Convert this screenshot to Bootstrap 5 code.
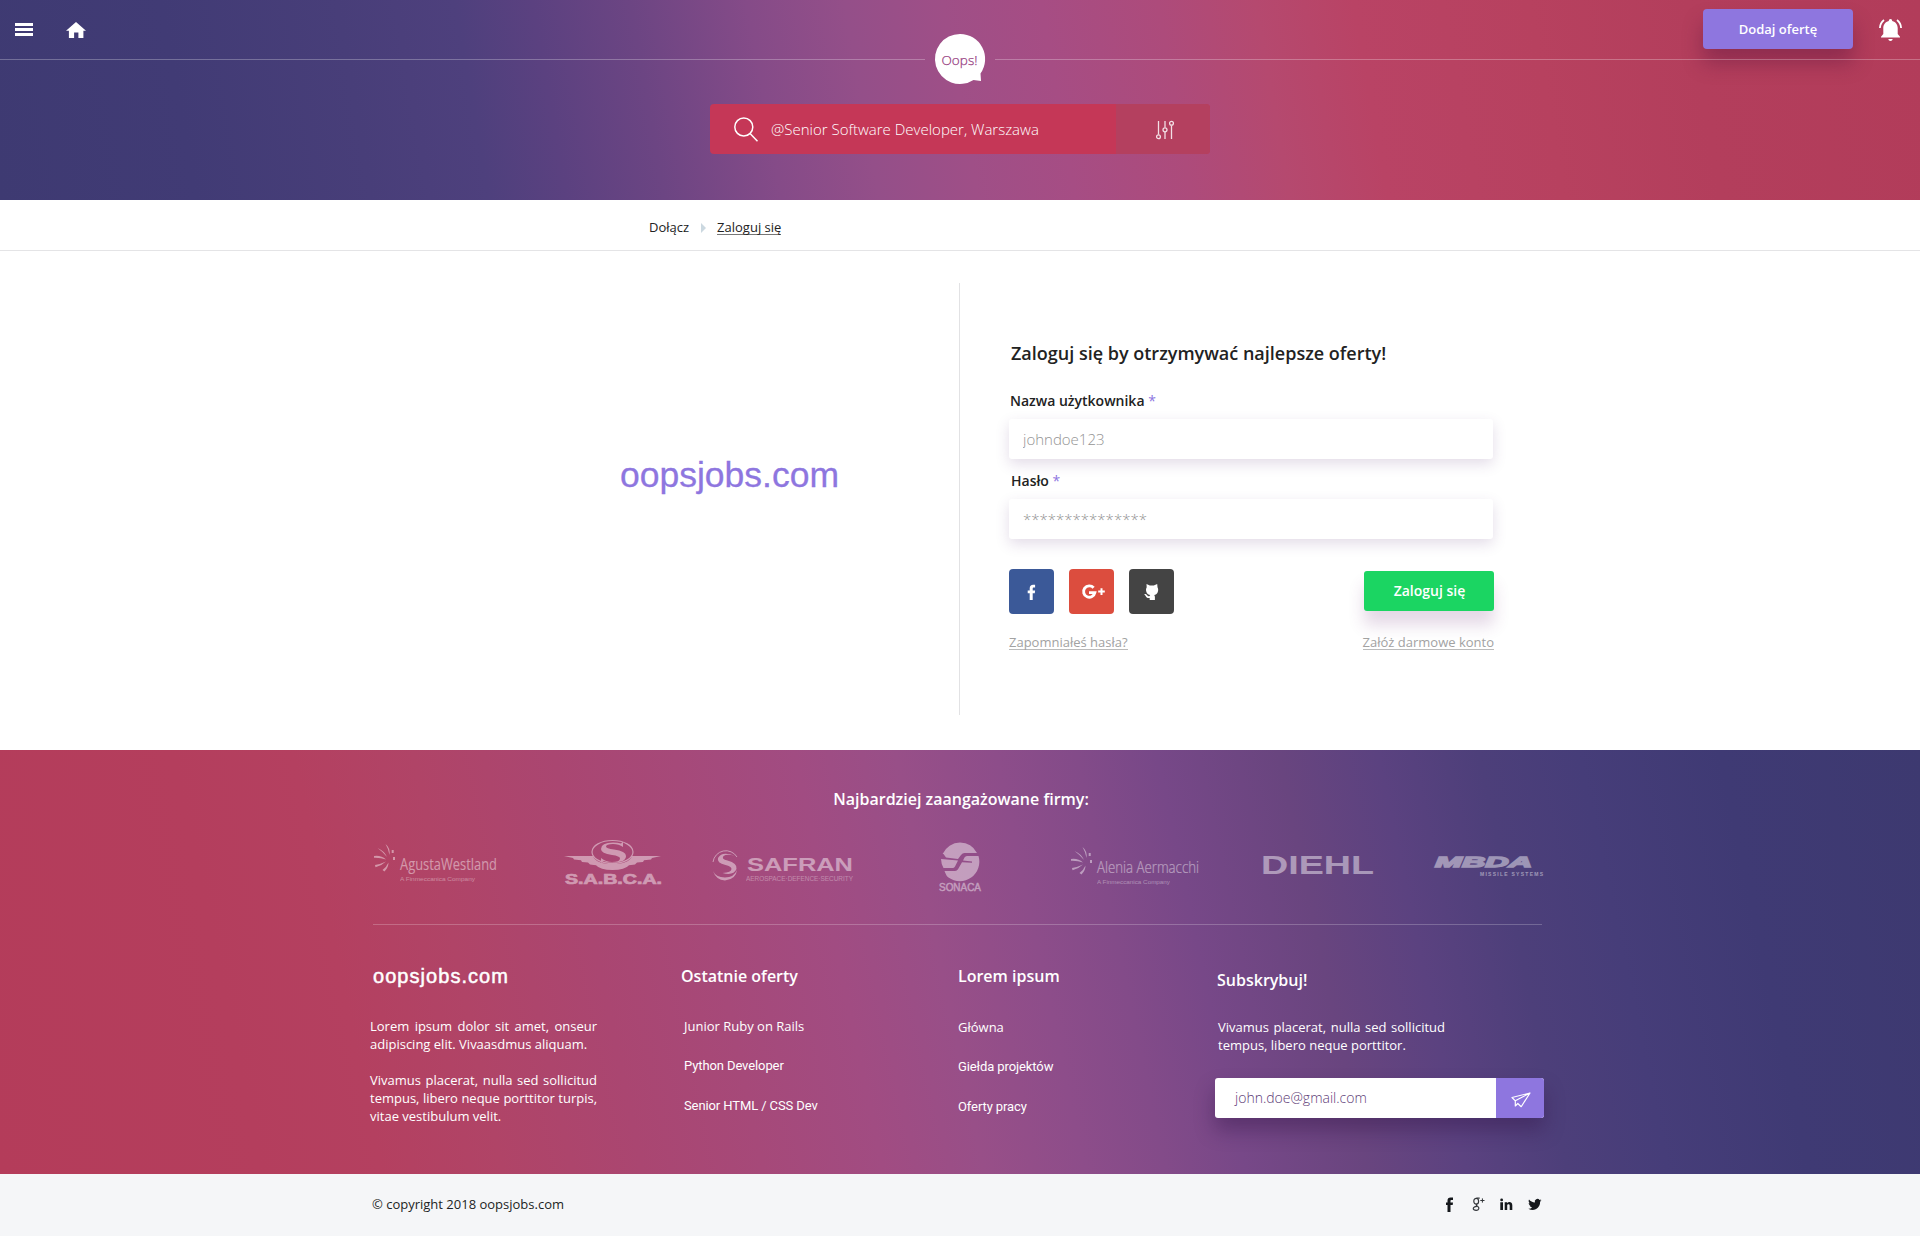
<!DOCTYPE html>
<html lang="pl">
<head>
<meta charset="utf-8">
<meta name="viewport" content="width=device-width, initial-scale=1">
<title>oopsjobs.com – Zaloguj się</title>
<link href="https://cdn.jsdelivr.net/npm/bootstrap@5.3.0/dist/css/bootstrap.min.css" rel="stylesheet">
<style>
body{font-family:"Open Sans","Noto Sans",sans-serif;font-size:13px;line-height:18px;color:#222;background:#fff;overflow-x:hidden}
a{color:inherit;text-decoration:none}
svg{display:block;flex:none;overflow:visible}
.site-head{height:200px;background:linear-gradient(80deg,#3e3a72 0%,#413b75 10%,#483e79 19%,#4e407d 25%,#5b4180 29%,#6c4583 34%,#854b88 40%,#944f89 45%,#9f4f87 50%,#a64d84 55%,#ad4b7b 61%,#b5496f 66%,#b94365 71%,#b7415f 80%,#b33e5c 88%,#b23c5a 100%)}
.topbar{height:59px;padding:9px 18px 0 15px}
.topbar .menu{margin-top:14px}
.topbar .home{margin:12px 0 0 33px}
.offer{width:150px;height:40px;line-height:40px;padding:0;border:0;border-radius:4px;background:#8e76df;color:#fff;font-size:13px;font-weight:600;box-shadow:0 14px 20px rgba(90,20,60,.4)}
.offer:hover{background:#7f67d3;color:#fff}
.bell{margin:9px 0 0 26px}
.brandline{height:50px;margin-top:-25px;gap:10px}
.rule{height:1px;background:rgba(255,255,255,.27)}
.finder{width:500px;height:50px;margin-top:20px;border-radius:4px;background:#c53757;color:#fff;font-size:15px;font-weight:300;overflow:hidden}
.finder .q{padding-left:24px;gap:13px}
.finder .filter{width:94px;background:#b4405f;padding-left:3px;padding-top:1px}
.crumbs{height:51px;border-bottom:1px solid #e4e4e6;padding-left:649px;padding-top:18px}
.crumbs svg{margin:5px 11px 0 12px}
.ul{border-bottom:1px solid #777;height:17px;line-height:18px}
.stage{height:499px;padding-top:32px}
.left-side{width:960px;height:432px;border-right:1px solid #e2e2e4;padding:172px 0 0 620px}
.big-logo{font:35.500px/40px "Liberation Sans",Arial,sans-serif;color:#8e76df;-webkit-text-stroke:.3px #8e76df}
.login{width:485px;margin-left:49px;padding-top:58px}
.login h1{font-size:18px;line-height:24px;font-weight:600;margin:0 0 26px 2px}
.login label{display:block;font-size:14px;line-height:20px;font-weight:600;margin:0 0 8px 1px}
.login label + input + label{margin:12px 0 8px 2px}
.login label b{color:#8e76df;font-weight:400}
.login .form-control{width:484px;height:40px;border:0;border-radius:3px;padding:0 14px;font-size:15px;font-weight:300;line-height:40px;box-shadow:0 5px 14px rgba(90,50,120,.17);color:#999;background:#fff}
.login .form-control::placeholder{color:#949494;opacity:1}
.socials{gap:15px;margin-top:0}
.soc{width:45px;height:45px;border-radius:4px}
.fb{background:#3b5998}.gp{background:#dc4d3e}.gh{background:#444}
.act{margin-top:30px}
.go{width:130px;height:40px;line-height:40px;margin-top:2px;padding:0 0 0 1px;border:0;border-radius:3px;background:#1bd562;color:#fff;font-size:14px;font-weight:600;box-shadow:0 14px 16px rgba(110,50,120,.19)}
.go:hover{background:#17c258;color:#fff}
.helplinks{margin-top:19px}
.soft{color:#a2a2a2;border-color:#bbb}
.partners{height:424px;background:linear-gradient(78deg,#b43c5a 0%,#b43e5d 13%,#b44060 19%,#b04467 25%,#aa4671 32%,#a64979 38%,#a14c82 44%,#984f88 49%,#8d4d8a 54%,#834b89 58%,#774888 62%,#69457f 68%,#5b4280 73%,#4d3f7a 78%,#463d79 83%,#3f3a74 90%,#3d3970 100%);color:#fff;padding-top:38px}
.partners h2,.partners h3{font-size:16px;line-height:22px;font-weight:600;margin:0}
.partners h2{padding-left:2px}
.logos{height:60px;margin-top:26px;padding-left:373px;fill:#fff;opacity:.45}
.logos text{font-family:"Liberation Sans",Arial,sans-serif}
.logos .hum{font-family:"Open Sans",sans-serif}
.logos .g1{margin-left:65px}.logos .g2{margin-left:49px}.logos .g3{margin-left:83px}.logos .g4{margin-left:87px}.logos .g5{margin-left:61px}.logos .g6{margin-left:60px}
.split{width:1169px;height:1px;margin:28px 0 0 373px;background:rgba(255,255,255,.22)}
.foot-cols{padding:40px 0 0 370px}
.fc1{width:311px}.fc2{width:277px}.fc3{width:257px}.fc4{width:329px}
.fc1 h3{font:20px/22px "Liberation Sans",Arial,sans-serif;letter-spacing:1.05px;-webkit-text-stroke:.5px #fff;margin:0 0 30px 3px}
.fc1 p{width:227px;margin:0 0 18px;text-align:justify}
.fc2 h3,.fc3 h3{margin-bottom:30px}
.fc2 ul,.fc3 ul{gap:22px}
.fc3 ul{padding-top:1px}
.fc2 ul{padding-left:3px!important}
.alt{font-family:Roboto,sans-serif;letter-spacing:-.1px}
.fc4 h3{margin:4px 0 27px 2px}
.fc4 p{width:227px;margin:0 0 24px 3px;text-align:justify}
.mailbox{width:329px;height:40px;border-radius:3px;overflow:hidden;background:#fff}
.mailwrap{box-shadow:0 12px 20px rgba(50,20,70,.4);border-radius:3px}
.mailbox span{font-size:14px;font-weight:300;line-height:40px;color:#5d3b76;padding-left:20px}
.mailbox a{width:48px;background:#8e76df;padding-top:3px;padding-left:1px}
.legal{height:62px;background:#f5f6f8;padding:21px 378px 0 372px;color:#1c1f24}
.legal .ic{margin-top:2px}
.legal .ic a+a{margin-left:15px}
</style>
</head>
<body>
<header class="site-head">
  <nav class="topbar d-flex align-items-start">
    <a href="#" class="menu" aria-label="Menu"><svg width="18" height="13" fill="#fff"><path d="M0 0h18v3H0zM0 5h18v3H0zM0 10h18v3H0z"/></svg></a>
    <a href="#" class="home" aria-label="Start"><svg width="20" height="17" viewBox="0 0 20 17" fill="#fff"><path d="M10 1 20 9.800h-2.600V17h-5v-5.600H8.100V17H2.900V9.800H0z"/></svg></a>
    <a href="#" class="btn offer ms-auto">Dodaj ofertę</a>
    <a href="#" class="bell" aria-label="Powiadomienia"><svg width="23" height="24" viewBox="0 0 23 24" fill="#fff"><path d="M11.500 1c1.100 0 1.700.8 1.700 1.900 3.800.9 5.500 3.900 5.500 7.200v6l2.300 2.700v.7H2v-.7l2.300-2.700v-6c0-3.300 1.800-6.300 5.500-7.200C9.800 1.800 10.400 1 11.500 1zM9.300 21h4.400c-.2 1.200-1 2-2.200 2s-2-.8-2.200-2z"/><path fill="none" stroke="#fff" stroke-width="1.800" d="M5 2C2.600 3.800 1.100 6.600.9 10M18 2c2.400 1.800 3.900 4.600 4.100 8"/></svg></a>
  </nav>
  <div class="brandline d-flex align-items-center">
    <div class="rule flex-fill"></div>
    <a href="#" aria-label="Oops!"><svg width="50" height="50" viewBox="0 0 50 50"><path fill="#fff" d="M25 0a25 25 0 0 1 20.500 39.500L46 47l-7.500-1A25 25 0 1 1 25 0z"/><text x="6.500" y="31" font-family="Open Sans" font-size="13.500" font-weight="300" fill="#97407f" stroke="#97407f" stroke-width=".25" textLength="36">Oops!</text></svg></a>
    <div class="rule flex-fill"></div>
  </div>
  <div class="finder d-flex mx-auto">
    <div class="q d-flex align-items-center flex-fill">
      <svg width="24" height="25" viewBox="0 0 24 25" fill="none" stroke="#fff" stroke-width="1.500"><circle cx="9.800" cy="10" r="9"/><path d="m16.300 16.800 7.200 7.400"/></svg>
      <span>@Senior Software Developer, Warszawa</span>
    </div>
    <a href="#" class="filter d-flex align-items-center justify-content-center" aria-label="Filtry"><svg width="18" height="20" viewBox="0 0 18 20" fill="none" stroke="#f3dfe5" stroke-width="1.300"><path d="M2.500 1v13.500M9 1v6.500M9 12v7M15.500 5.500V19"/><circle cx="2.500" cy="16.700" r="1.900"/><circle cx="9" cy="9.800" r="2"/><circle cx="15.500" cy="3.200" r="1.900"/></svg></a>
  </div>
</header>

<nav class="crumbs d-flex align-items-start">
  <a href="#">Dołącz</a>
  <svg width="5" height="10" fill="#cbd8e0"><path d="M0 0l5 5-5 5z"/></svg>
  <a href="#" class="ul">Zaloguj się</a>
</nav>

<main class="stage d-flex align-items-start">
  <div class="left-side"><div class="big-logo">oopsjobs.com</div></div>
  <form class="login">
    <h1>Zaloguj się by otrzymywać najlepsze oferty!</h1>
    <label for="user">Nazwa użytkownika <b>*</b></label>
    <input id="user" class="form-control" type="text" placeholder="johndoe123">
    <label for="pass">Hasło <b>*</b></label>
    <input id="pass" class="form-control" type="text" placeholder="***************">
    <div class="act d-flex align-items-start justify-content-between">
      <div class="socials d-flex">
        <a href="#" class="soc fb" aria-label="Facebook"><svg width="45" height="45" fill="#fff"><path d="M20.700 31v-6.800h-2v-2.800h2v-2c0-2.300 1.300-3.600 3.400-3.600h2v2.600h-1.300c-.8 0-1.100.4-1.100 1.100v1.900h2.400l-.3 2.800h-2.100V31z"/></svg></a>
        <a href="#" class="soc gp" aria-label="Google+"><svg width="45" height="45" viewBox="0 0 45 45" fill="none" stroke="#fff"><path stroke-width="2.900" d="M24.600 18.800a5.700 5.700 0 1 0 1.300 4.800H20"/><path stroke-width="2" d="M32.500 19.300v6.600M29.200 22.600h6.600"/></svg></a>
        <a href="#" class="soc gh" aria-label="GitHub"><svg width="45" height="45" fill="#fff"><path d="m17.500 15 3.300 1.400h4L28.200 15l.3 3.300c.9 1.400.9 3.600.1 5.100-.7 1.400-1.900 2.300-3.400 2.600.5.600.7 1.200.7 2V31h-5.200v-2c-2.300.4-3.300-.4-3.900-1.700-.4-.8-.8-1.200-1.500-1.700l.4-.7c1.200 0 1.900.5 2.500 1.400.7.900 1.300 1.100 2.400.7.100-.4.300-.7.600-1-1.600-.3-2.900-1.200-3.600-2.600-.8-1.500-.8-3.700.1-5.100z"/></svg></a>
      </div>
      <button type="button" class="btn go">Zaloguj się</button>
    </div>
    <div class="helplinks d-flex justify-content-between">
      <a href="#" class="ul soft">Zapomniałeś hasła?</a>
      <a href="#" class="ul soft">Załóż darmowe konto</a>
    </div>
  </form>
</main>

<section class="partners">
  <h2 class="text-center">Najbardziej zaangażowane firmy:</h2>
  <div class="logos d-flex">
    <svg width="125" height="60" viewBox="0 0 125 60"><path d="M12.500 8q5 4 4 11-1-6-4-11zM4.500 12q7 3 9.500 9-4-5-9.500-9zM1 20q7-1 12 3.500-5-2-12-1.800zM2 29q6-1 11-3.500-4 4-10.500 5.700zM9.500 34q4-3 6-7.500 0 5-4 9zM18.700 14h2v3h-2zM20 21h2v3h-2z"/><text class="hum" x="27" y="34" font-size="17" textLength="97" lengthAdjust="spacingAndGlyphs">AgustaWestland</text><text x="27" y="44.500" font-size="6" textLength="75" lengthAdjust="spacingAndGlyphs" opacity=".8">A Finmeccanica Company</text></svg>
    <svg class="g1" width="99" height="60" viewBox="0 0 99 60"><path d="M1 20h29q3 8 19.500 8T69 20h29l-9 2-1 1.500-7 .7-1 1.700-6 .6-2 2-6 .8q-4 4.700-16.500 4.700T33 29.300l-6-.8-2-2-6-.6-1-1.700-7-.7L10 22z"/><ellipse cx="49.500" cy="16" rx="20.500" ry="11.500" fill="none" stroke="#fff" stroke-width="1.200"/><path d="M60 5.500v5.500q-4-3-10-3-7 0-7 2.500 0 2 8 3 12 1.500 12 6.500 0 6.500-13 6.500-6 0-9.500-1.500L38 27v-5q5 4 11 4 8 0 8-3.500 0-2.500-8-3.500-11-1.500-11-6 0-6.500 12-6.500 5 0 8 1z"/><text x="2" y="48" font-size="14.500" font-weight="700" textLength="97" lengthAdjust="spacingAndGlyphs" stroke="#fff" stroke-width=".7">S.A.B.C.A.</text></svg>
    <svg class="g2" width="143" height="60" viewBox="0 0 143 60"><path fill="none" stroke="#fff" d="M2 26a13 13 0 0 1 24-5"/><path d="M2 35q3 6.500 12 6.500T26 34q-1 9.500-12 10.500Q5 44 2 35zM24 20q-8-2.500-11.500 0-2.500 3 4 4.500 10 2.500 9 8.500-3 7-14 4 9-.5 9-4 0-2.500-6-4-9-2-7.500-7Q11 14.500 24 20z"/><text x="36" y="34.800" font-size="17.500" font-weight="700" textLength="106" lengthAdjust="spacingAndGlyphs">SAFRAN</text><text x="35" y="45" font-size="6.500" textLength="107" lengthAdjust="spacingAndGlyphs" opacity=".75">AEROSPACE·DEFENCE·SECURITY</text></svg>
    <svg class="g3" width="46" height="60" viewBox="0 0 46 60"><path fill-rule="evenodd" d="M23 6.500a19.500 19.500 0 0 1 17 10.500H27.500q-2 0-3.500 2l-3 4-12-1.500-2.500-3.500H5.600A19.500 19.500 0 0 1 23 6.500zM4 23l17 1.500-3 6q-.8 1.500-2.500 1.500H6.500A19.500 19.500 0 0 1 4 23zM41.500 20a19.500 19.500 0 0 1-30 21.500q-2-1-4-6.500H18q2 0 3-1.800l4-7 10 .5v-1.200l-9-1 1.500-3q.8-1.500 2.500-1.500z"/><text x="2" y="54.500" font-size="10.500" textLength="42" lengthAdjust="spacingAndGlyphs" stroke="#fff" stroke-width=".4">SONACA</text></svg>
    <svg class="g4" width="130" height="60" viewBox="0 0 130 60"><path d="M12.500 11q5 4 4 11-1-6-4-11zM4.500 15q7 3 9.500 9-4-5-9.500-9zM1 23q7-1 12 3.500-5-2-12-1.800zM2 32q6-1 11-3.500-4 4-10.500 5.700zM9.500 37q4-3 6-7.500 0 5-4 9zM18.700 17h2v3h-2zM20 24h2v3h-2z"/><text class="hum" x="27" y="37" font-size="17" font-weight="300" textLength="102" lengthAdjust="spacingAndGlyphs" stroke="#fff" stroke-width=".2">Alenia Aermacchi</text><text x="27" y="47.500" font-size="6" textLength="73" lengthAdjust="spacingAndGlyphs" opacity=".8">A Finmeccanica Company</text></svg>
    <svg class="g5" width="113" height="60" viewBox="0 0 113 60"><text x="0" y="38" font-size="26.500" font-weight="700" textLength="113" lengthAdjust="spacingAndGlyphs">DIEHL</text></svg>
    <svg class="g6" width="110" height="60" viewBox="0 0 110 60"><text x="1" y="31" font-size="15" font-weight="700" font-style="italic" textLength="97" lengthAdjust="spacingAndGlyphs" stroke="#fff" stroke-width="1.300">MBDA</text><text x="46" y="39.500" font-size="5" font-weight="700" textLength="63" lengthAdjust="spacing">MISSILE SYSTEMS</text></svg>
  </div>
  <div class="split"></div>
  <div class="foot-cols d-flex align-items-start">
    <div class="fc1">
      <h3>oopsjobs.com</h3>
      <p>Lorem ipsum dolor sit amet, onseur adipiscing elit. Vivaasdmus aliquam.</p>
      <p>Vivamus placerat, nulla sed sollicitud tempus, libero neque porttitor turpis, vitae vestibulum velit.</p>
    </div>
    <div class="fc2">
      <h3>Ostatnie oferty</h3>
      <ul class="list-unstyled d-flex flex-column mb-0">
        <li><a href="#">Junior Ruby on Rails</a></li>
        <li class="alt"><a href="#">Python Developer</a></li>
        <li class="alt"><a href="#">Senior HTML / CSS Dev</a></li>
      </ul>
    </div>
    <div class="fc3">
      <h3>Lorem ipsum</h3>
      <ul class="list-unstyled d-flex flex-column mb-0">
        <li><a href="#">Główna</a></li>
        <li class="alt"><a href="#">Giełda projektów</a></li>
        <li class="alt"><a href="#">Oferty pracy</a></li>
      </ul>
    </div>
    <div class="fc4">
      <h3>Subskrybuj!</h3>
      <p>Vivamus placerat, nulla sed sollicitud tempus, libero neque porttitor.</p>
      <div class="mailwrap"><div class="mailbox d-flex">
        <span class="flex-fill">john.doe@gmail.com</span>
        <a href="#" class="d-flex align-items-center justify-content-center" aria-label="Wyślij"><svg width="20" height="16" viewBox="0 0 20 16" fill="none" stroke="#fff" stroke-width="1.200" stroke-linejoin="round"><path d="M19 1 1 5.500l3.300 3.300V14l2.500-2.500 3.400 3.200zM19 1 4.300 8.800"/></svg></a>
      </div></div>
    </div>
  </div>
</section>

<footer class="legal d-flex align-items-start justify-content-between">
  <span>© copyright 2018 oopsjobs.com</span>
  <div class="ic d-flex align-items-start">
    <a href="#" aria-label="Facebook"><svg width="7" height="15" viewBox="0 0 7 15" fill="#15181c"><path d="M1.500 15V8H0V5.500h1.500V3.700C1.500 1.500 2.500.4 4.600.4H7V3H5.600c-.8 0-1.100.3-1.100 1v1.500H7L6.700 8H4.500v7z"/></svg></a>
    <a href="#" class="ps-1" aria-label="Google+"><svg width="13" height="17" viewBox="0 0 13 17" fill="none" stroke="#33363a"><ellipse cx="4.200" cy="4.200" rx="2.400" ry="2.900" stroke-width="1.200"/><path d="M4.500 1.200h3.200M5 7c-1.500 1-.5 1.500.8 2.400 1.900 1.300 1.200 4-1.600 4C.2 13.400.2 9.900 4.800 9.300" stroke-width="1.200"/><path d="M8.300 3.500h4.200M10.400 1.400v4.200"/></svg></a>
    <a href="#" aria-label="LinkedIn"><svg width="13" height="15" viewBox="0 0 13 15" fill="#15181c"><path d="M.3 5.200H3V13H.3zM4.700 5.200h2.500v1C8.500 4.400 12.300 4.600 12.300 8.200V13H9.700V8.600c0-2-2.500-1.900-2.500 0V13H4.700z"/><circle cx="1.650" cy="2.900" r="1.400"/></svg></a>
    <a href="#" aria-label="Twitter"><svg width="14" height="15" viewBox="0 0 14 15" fill="#15181c"><path d="M13.500 3.300c-.5.200-.9.300-1.400.4.500-.3.900-.8 1.100-1.400-.5.300-1 .5-1.600.6a2.700 2.700 0 0 0-4.700 2.500C4.500 5.300 2.500 4.200 1 2.500c-.7 1.300-.4 2.900.9 3.700-.4 0-.8-.1-1.200-.3 0 1.300.9 2.500 2.200 2.700-.4.100-.8.100-1.200 0 .3 1.100 1.300 1.900 2.500 1.900A5.500 5.500 0 0 1 .3 11.700C6.500 15.200 12.300 10.700 12.100 4.700c.6-.4 1-.9 1.400-1.400z"/></svg></a>
  </div>
</footer>
<script src="https://cdn.jsdelivr.net/npm/bootstrap@5.3.0/dist/js/bootstrap.bundle.min.js"></script>
</body>
</html>
